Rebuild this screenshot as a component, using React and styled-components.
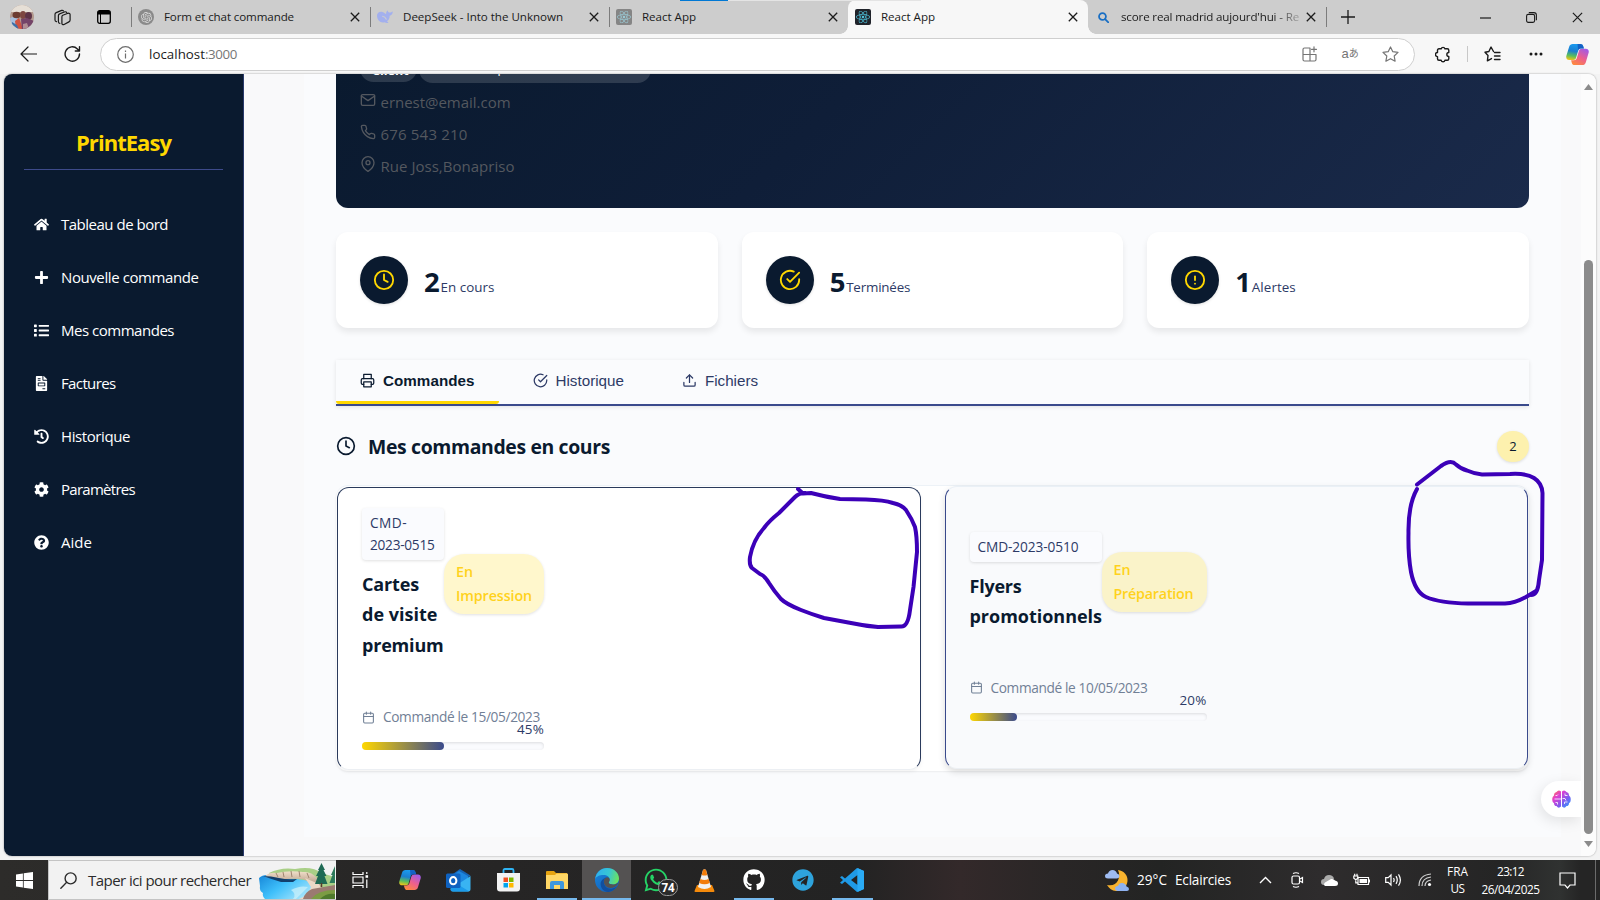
import React, { useLayoutEffect, useRef } from "react";
import styled, { createGlobalStyle, css } from "styled-components";
import {
  FaHome, FaPlus, FaList, FaFileInvoice, FaHistory, FaCog, FaQuestionCircle,
  FaReact, FaWhatsapp, FaGithub, FaTelegram, FaBrain,
} from "react-icons/fa";
import {
  FiClock, FiCheckCircle, FiAlertCircle, FiPrinter, FiUpload, FiMail, FiPhone, FiMapPin, FiCalendar,
} from "react-icons/fi";
import { SiOpenai } from "react-icons/si";

const GlobalStyle = createGlobalStyle`
  * { box-sizing: border-box; }
  body { margin: 0; background: #f7f7f7; overflow: hidden; }
  svg { display: block; flex: none; }
`;

const ui = `"Open Sans", "Noto Sans", sans-serif`;

/* ---------- text ---------- */

const TextSpan = styled.span`
  display: inline-block;
  white-space: pre;
  font-size: ${(p) => p.$size}px;
  font-weight: ${(p) => p.$weight || 400};
  color: ${(p) => p.$color || "inherit"};
  font-family: ${(p) => p.$family || "inherit"};
  line-height: ${(p) => (p.$lh ? `${p.$lh}px` : "inherit")};
`;

/* Tracks its letters so that the line takes the given width. */
function Label({ w, size, weight, color, family, lh, children }) {
  const ref = useRef(null);
  useLayoutEffect(() => {
    const el = ref.current;
    if (!w) return;
    el.style.letterSpacing = "0px";
    const natural = el.getBoundingClientRect().width;
    el.style.letterSpacing = `${(w - natural) / el.textContent.length}px`;
  }, [w]);
  return (
    <TextSpan ref={ref} $size={size} $weight={weight} $color={color} $family={family} $lh={lh}>
      {children}
    </TextSpan>
  );
}

/* ---------- window ---------- */

const Screen = styled.div`
  position: relative;
  width: 1600px;
  height: 900px;
  overflow: hidden;
  display: flex;
  flex-direction: column;
  background: #f3f3f3;
  font-family: ${ui};
  color: #1b1b1b;
`;

const TabStrip = styled.div`
  position: relative;
  height: 34px;
  flex: none;
  display: flex;
  background: #cdcdcd;
`;

const LoadStrip = styled.div`
  position: absolute;
  top: 0;
  left: 680px;
  width: 241px;
  height: 1px;
  background: linear-gradient(90deg, #0078d4 48px, #e4e4e4 48px);
`;

const StripTools = styled.div`
  width: 131px;
  display: flex;
  align-items: center;
  padding-left: 10px;
  gap: 20px;
  svg:last-child { margin-left: 6px; }
`;

const Tab = styled.div`
  position: relative;
  width: ${(p) => p.$w}px;
  display: flex;
  align-items: center;
  padding: 0 10px 0 7px;
  background: ${(p) => (p.$active ? "#f7f7f7" : "transparent")};
  border-radius: ${(p) => (p.$active ? "8px 8px 0 0" : "0")};
  ${(p) => p.$active && css`
    &::before, &::after {
      content: "";
      position: absolute;
      bottom: 0;
      width: 8px;
      height: 8px;
    }
    &::before { left: -8px; background: radial-gradient(circle at 0 0, #cdcdcd 7.5px, #f7f7f7 8px); }
    &::after { right: -8px; background: radial-gradient(circle at 100% 0, #cdcdcd 7.5px, #f7f7f7 8px); }
  `}
`;

const TabDivider = styled.i`
  position: absolute;
  left: 0;
  top: 7px;
  width: 1px;
  height: 20px;
  background: #7c7c7c;
`;

const TabTitle = styled.div`
  flex: 1;
  min-width: 0;
  margin-left: 10px;
  margin-bottom: 2px;
  line-height: 20px;
  overflow: hidden;
  ${(p) => p.$fade && css`
    -webkit-mask-image: linear-gradient(90deg, #000 152px, transparent 186px);
    mask-image: linear-gradient(90deg, #000 152px, transparent 186px);
  `}
`;

const Favicon = styled.span`
  width: 16px;
  height: 16px;
  flex: none;
  display: flex;
  align-items: center;
  justify-content: center;
  border-radius: ${(p) => p.$radius || "0"};
  background: ${(p) => p.$bg || "none"};
  color: ${(p) => p.$color || "#333"};
`;

const StripEnd = styled.div`
  position: relative;
  flex: 1;
  display: flex;
  align-items: center;
  padding-left: 15px;
`;

const WindowButtons = styled.div`
  margin-left: auto;
  margin-right: 17px;
  display: flex;
  gap: 35px;
`;

const Toolbar = styled.div`
  height: 40px;
  flex: none;
  display: flex;
  align-items: center;
  background: #f7f7f7;
  padding: 0 11px 0 20px;
`;

const NavButtons = styled.div`
  display: flex;
  align-items: center;
  gap: 27px;
  width: 80px;
`;

const AddressBar = styled.div`
  width: 1315px;
  height: 33px;
  display: flex;
  align-items: center;
  background: #fff;
  border: 1px solid #cfcfcf;
  border-radius: 17px;
  padding: 0 15px 0 16px;
  gap: 15px;
  flex: none;
`;

const Address = styled.span`
  margin-bottom: 2px;
`;

const AddressIcons = styled.div`
  margin-left: auto;
  display: flex;
  align-items: center;
  gap: 24px;
  color: #757575;
`;

const Translate = styled.span`
  width: 16px;
  display: flex;
  justify-content: center;
  align-items: center;
  font: 13px/16px "Liberation Sans", "Noto Sans CJK JP", sans-serif;
  small { font-size: 10px; }
`;

const ToolbarEnd = styled.div`
  flex: 1;
  display: flex;
  align-items: center;
  padding-left: 20px;
  svg:last-child { margin-left: auto; }
`;

const ToolbarDivider = styled.i`
  width: 1px;
  height: 16px;
  margin: 0 16px;
  background: #c8c8c8;
`;

const More = styled.svg`
  margin-left: 28px;
`;

/* ---------- page ---------- */

const Viewport = styled.div`
  height: 782px;
  flex: none;
  margin: 0 4px;
  display: flex;
  overflow: hidden;
  border-radius: 8px;
  background: #f9f9fa;
  box-shadow: 0 0 2px rgba(0, 0, 0, 0.4);
`;

const Sidebar = styled.aside`
  width: 240px;
  flex: none;
  background: #0a1a2f;
  border-right: 1px solid #2a3a6b;
  padding: 52px 20px 0;
  color: #fff;
`;

const Brand = styled.div`
  height: 44px;
  display: flex;
  justify-content: center;
  border-bottom: 1px solid #3d4a8a;
  line-height: 33px;
`;

const Menu = styled.nav`
  margin-top: 28px;
`;

const MenuItem = styled.div`
  height: 53px;
  display: flex;
  align-items: center;
  gap: 12px;
  padding-left: 10px;
  span { margin-bottom: 2px; }
`;

const Main = styled.main`
  flex: 1;
  padding: 0 20px 19px 60px;
`;

const Panel = styled.div`
  height: 763px;
  padding: 0 32px;
  background: #fafbfd;
`;

const Profile = styled.section`
  height: 134px;
  padding: 0 24px;
  border-radius: 0 0 12px 12px;
  background: linear-gradient(135deg, #0a1a2f 0%, #0f1e38 40%, #1a2a4a 100%);
  color: #54585f;
`;

const Tags = styled.div`
  height: 9px;
  margin-bottom: 3px;
  display: flex;
  align-items: flex-end;
  gap: 2px;
  overflow: hidden;
`;

const Tag = styled.span`
  flex: none;
  width: ${(p) => p.$w}px;
  height: 27px;
  margin-bottom: ${(p) => p.$lift || 0}px;
  border-radius: 14px;
  background: rgba(255, 255, 255, 0.14);
  color: #fff;
  font-size: 12.5px;
  font-weight: ${(p) => p.$weight || 400};
  line-height: 22px;
  padding-left: 12px;
  padding-top: ${(p) => p.$top || 0}px;
  white-space: nowrap;
`;

const ContactRow = styled.div`
  height: 32px;
  line-height: 32px;
  display: flex;
  gap: 4.5px;
  svg { margin-top: 6px; }
`;

const Stats = styled.section`
  display: grid;
  grid-template-columns: repeat(3, 1fr);
  gap: 24px;
  margin-top: 24px;
`;

const StatCard = styled.div`
  height: 96px;
  padding: 0 24px;
  display: flex;
  align-items: center;
  gap: 16px;
  background: #fff;
  border-radius: 12px;
  box-shadow: 0 4px 6px rgba(0, 0, 0, 0.08);
`;

const StatIcon = styled.div`
  width: 48px;
  height: 48px;
  border-radius: 50%;
  display: flex;
  align-items: center;
  justify-content: center;
  background: #0a1a2f;
  color: #ffd700;
  box-shadow: 0 1px 3px rgba(0, 0, 0, 0.12);
`;

const StatText = styled.div`
  display: flex;
  align-items: baseline;
  gap: 1px;
  line-height: 44px;
  padding-top: 8px;
`;

const Tabs = styled.div`
  height: 46px;
  margin-top: 32px;
  display: flex;
  gap: 10px;
  border-bottom: 2px solid #3a4a8c;
  box-shadow: 0 1px 4px rgba(0, 0, 0, 0.1);
`;

const PageTab = styled.div`
  padding: 0 24px;
  display: flex;
  align-items: center;
  gap: 8px;
  color: ${(p) => (p.$active ? "#0a1a2f" : "#2d3a66")};
  border-bottom: 3px solid ${(p) => (p.$active ? "#ffd700" : "transparent")};
  border-radius: 0 0 3px 3px;
`;

const SectionHead = styled.div`
  height: 30px;
  margin: 25px 0;
  display: flex;
  align-items: center;
  gap: 12px;
  color: #0a1a2f;
`;

const Count = styled.span`
  margin-left: auto;
  width: 32px;
  height: 31px;
  border-radius: 16px;
  display: flex;
  align-items: center;
  justify-content: center;
  background: #fdf1ae;
  box-shadow: 0 1px 3px rgba(0, 0, 0, 0.12);
`;

const Orders = styled.section`
  height: 285px;
  display: flex;
  gap: 24px;
  padding: 0 1px;
  background: #fff;
  border-radius: 12px;
  box-shadow: 0 1px 2px rgba(0, 0, 0, 0.06), 0 -1px 0 #edf2f7;
`;

const OrderCard = styled.article`
  flex: 1;
  height: ${(p) => p.$h}px;
  margin-top: ${(p) => p.$mt}px;
  padding: ${(p) => p.$pt}px 24px 0;
  border: 1px solid ${(p) => p.$border};
  border-top-color: ${(p) => (p.$hover ? "#eaf0f6" : p.$border)};
  border-bottom-color: #eceff3;
  border-radius: 12px;
  background: ${(p) => (p.$hover ? "#f9fafc" : "#fff")};
  box-shadow: ${(p) => (p.$hover ? "0 3px 7px rgba(0,0,0,0.14)" : "0 2px 4px rgba(0,0,0,0.05)")};
`;

const OrderBody = styled.div`
  width: ${(p) => p.$w}px;
`;

const OrderTop = styled.div`
  display: flex;
  align-items: center;
`;

const OrderInfo = styled.div`
  width: ${(p) => p.$w}px;
  flex: none;
`;

const OrderId = styled.div`
  display: flex;
  flex-direction: column;
  align-items: flex-start;
  padding: 4px 8px;
  margin-bottom: 9px;
  border-radius: 4px;
  background: #fafbfe;
  box-shadow: 0 1px 3px rgba(0, 0, 0, 0.12);
`;

const OrderTitle = styled.div`
  display: flex;
  flex-direction: column;
  align-items: flex-start;
`;

const Status = styled.div`
  flex: 1;
  height: 60px;
  display: flex;
  flex-direction: column;
  align-items: flex-start;
  padding: 6px 12px;
  border-radius: 20px;
  background: rgba(255, 215, 0, 0.2);
  box-shadow: 0 1px 3px rgba(0, 0, 0, 0.12);
`;

const OrderDate = styled.div`
  display: flex;
  align-items: center;
  gap: 8px;
  margin-top: ${(p) => p.$gap}px;
  color: #718096;
`;

const Percent = styled.div`
  display: flex;
  justify-content: flex-end;
  margin-top: -10px;
`;

const Track = styled.div`
  height: 8px;
  margin-top: 2px;
  border-radius: 4px;
  background: #fafbfe;
  box-shadow: inset 0 1px 3px rgba(0, 0, 0, 0.12);
`;

const Fill = styled.div`
  height: 8px;
  border-radius: 4px;
  background: linear-gradient(90deg, #ffd700, #3a4a8c);
`;

const ScrollBar = styled.div`
  width: 15px;
  flex: none;
  display: flex;
  flex-direction: column;
  align-items: center;
  background: #fcfcfc;
  padding-top: 10px;
`;

const Thumb = styled.div`
  width: 9px;
  height: 574px;
  margin: 170px 0 7px;
  border-radius: 5px;
  background: #8b8b8b;
`;

const Assistant = styled.div`
  position: absolute;
  left: 1541px;
  top: 781px;
  width: 40px;
  height: 36px;
  display: flex;
  align-items: center;
  padding-left: 11px;
  background: #fff;
  border-radius: 18px 0 0 18px;
  box-shadow: -2px 4px 14px rgba(0, 0, 0, 0.1);
  clip-path: inset(-20px 0 -24px -20px);
  svg path { fill: url(#brainGrad); }
  svg path.folds { fill: none; stroke: #fff; stroke-width: 1; opacity: 0.8; }
`;

const Ink = styled.svg`
  position: absolute;
  left: 0;
  top: 0;
  pointer-events: none;
  fill: none;
  stroke: #3c00b8;
  stroke-width: 4;
  stroke-linecap: round;
  stroke-linejoin: round;
`;

/* ---------- taskbar ---------- */

const Taskbar = styled.footer`
  height: 40px;
  margin-top: 4px;
  flex: none;
  display: flex;
  color: #fff;
  background: linear-gradient(90deg, #2d2c2a 0, #262525 500px, #232323 860px, #33292a 960px, #292626 1060px, #232423 1160px, #2e2c2d 1320px, #252525 1500px, #303231 1560px, #252525 1580px);
`;

const StartButton = styled.div`
  width: 48px;
  display: flex;
  align-items: center;
  justify-content: center;
`;

const SearchBox = styled.div`
  width: 288px;
  display: flex;
  align-items: center;
  background: #f2f2f2;
  border: 1px solid #c4c4c4;
  border-right: 0;
  color: #2b2b2b;
  padding-left: 11px;
  gap: 11px;
  overflow: hidden;
  > svg:last-child { margin-left: -3px; }
`;

const TaskButton = styled.div`
  position: relative;
  width: 49.2px;
  display: flex;
  align-items: center;
  justify-content: center;
  background: ${(p) => (p.$active ? "#545252" : "transparent")};
  &::after {
    content: "";
    position: absolute;
    bottom: 0;
    left: ${(p) => (p.$active ? 0 : 4.5)}px;
    right: ${(p) => (p.$active ? 0 : 4.5)}px;
    height: ${(p) => (p.$open || p.$active ? 2 : 0)}px;
    background: #76b9ed;
  }
`;

const Badge = styled.span`
  position: absolute;
  left: 27px;
  top: 19px;
  width: 20px;
  height: 17px;
  border: 1px solid #9b9b9b;
  border-radius: 9px;
  background: #2a2a2a;
  font: 700 11.5px/15px ${ui};
  text-align: center;
`;

const Tray = styled.div`
  margin-left: auto;
  display: flex;
  align-items: center;
`;

const TrayIcon = styled.div`
  width: 32px;
  display: flex;
  justify-content: center;
`;

const TrayText = styled.div`
  width: ${(p) => p.$w}px;
  display: flex;
  flex-direction: column;
  align-items: center;
`;

const Weather = styled.div`
  display: flex;
  align-items: center;
  gap: 8px;
  margin-right: 18px;
  span { margin-bottom: 1px; }
`;

const Notice = styled.div`
  width: 40px;
  height: 40px;
  margin-right: 8px;
  display: flex;
  align-items: center;
  justify-content: center;
`;

const DesktopEdge = styled.div`
  width: 5px;
  height: 40px;
  border-left: 1px solid #6b6b6b;
`;

/* ---------- drawings ---------- */

const Cross = ({ s = 10, sw = 1.3 }) => (
  <svg width={s} height={s} viewBox="0 0 10 10" stroke="#1b1b1b" strokeWidth={sw} fill="none">
    <path d="M.8.8l8.4 8.4M9.2.8L.8 9.2" />
  </svg>
);

const Avatar = () => (
  <svg width="24" height="24" viewBox="0 0 24 24">
    <clipPath id="av"><circle cx="12" cy="12" r="12" /></clipPath>
    <g clipPath="url(#av)">
      <rect width="24" height="24" fill="#b39a8e" />
      <rect width="24" height="7" fill="#e6dfd6" />
      <path d="M0 13l6-2 3 5v8H0z" fill="#a9c0de" />
      <ellipse cx="6.500" cy="10" rx="4" ry="3.200" fill="#6d3d31" />
      <ellipse cx="13" cy="10" rx="3" ry="4" fill="#7d4740" />
      <ellipse cx="18.500" cy="11" rx="3.500" ry="4" fill="#5d3346" />
      <path d="M5 16l4-3 4 11H6z" fill="#cf5240" />
      <path d="M11 14l6-1 7 3v9H12z" fill="#744468" />
      <path d="M13 19l4-1 2 6h-6z" fill="#b08d93" />
      <path d="M2 17l5 3 2 5H2z" fill="#3c6fa8" />
    </g>
  </svg>
);

const Workspaces = () => (
  <svg width="17" height="17" viewBox="0 0 17 17" fill="none" stroke="#1b1b1b" strokeWidth="1.2" strokeLinejoin="round" strokeLinecap="round">
    <path d="M8.800 6.200l5.200-1.900q1.900-.4 2.100 1.200v5.500q0 1.300-1.200 1.900l-4.800 2.600q-2 .7-2.200-1.100V7.800q0-1.200.9-1.600z" />
    <path d="M5.800 14.400q-1.400-.1-1.400-1.600V6.600q.1-1.300 1.200-1.700L10.900 2.800q1.400-.3 1.900.9" />
    <path d="M2.500 12.700Q1 12.600 1 11.100V5.300q.1-1.300 1.200-1.700L7.700 1.400q1.200-.3 1.700.5" />
  </svg>
);

const TabActions = () => (
  <svg width="14" height="14" viewBox="0 0 14 14">
    <rect x=".7" y=".7" width="12.600" height="12.600" rx="2" fill="none" stroke="#000" strokeWidth="1.3" />
    <path d="M.7 2.500q0-1.800 1.800-1.800h9q1.800 0 1.800 1.800V4.500H.7z" fill="#000" />
    <path d="M3.500 4v9" stroke="#000" />
  </svg>
);

const Whale = () => (
  <svg width="16" height="14" viewBox="0 0 16 14" fill="#a3b0ee">
    <path d="M0 5.500C0 2.800 2.700 1.200 5.500 2c1.700.5 2.300 1.600 3.600 2.100C9 2.500 9.500 1 10.800.4c0 1.300.5 1.900 1.600 2 1.300.1 2.300-.5 3.400-1-.1 2.600-1.500 3.800-3.100 4.400.1 2.400-1 4.400-2.700 5.400l1.500 1.600c-1.500.5-2.900 0-4-.6C3.500 13.300 0 10.400 0 5.500z" />
    <path d="M5.300 6.300c1.800.2 3.200 1.300 4.200 3.200" stroke="#cdcdcd" fill="none" strokeWidth="1.100" />
  </svg>
);

const Magnifier = ({ color, size = 11, sw = 2, flip }) => (
  <svg width={size} height={size} viewBox="0 0 16 16" fill="none" stroke={color} strokeWidth={sw} strokeLinecap="round">
    {flip ? <><circle cx="10" cy="6" r="5.200" /><path d="M6.300 9.700L.8 15.200" /></> : <><circle cx="6.500" cy="6.500" r="5" /><path d="M10.300 10.300L15 15" /></>}
  </svg>
);

const CopilotLogo = ({ s = 23 }) => (
  <svg width={s} height={s} viewBox="0 0 24 24">
    <defs>
      <linearGradient id="cpA" x1=".5" y1="0" x2=".3" y2="1">
        <stop offset="0" stopColor="#1a9bf0" /><stop offset=".45" stopColor="#1b7fd0" /><stop offset=".75" stopColor="#5bbf5a" /><stop offset="1" stopColor="#f0c419" />
      </linearGradient>
      <linearGradient id="cpB" x1=".8" y1="0" x2=".2" y2="1">
        <stop offset="0" stopColor="#a05be8" /><stop offset=".5" stopColor="#ec5f8f" /><stop offset="1" stopColor="#ff8a3c" />
      </linearGradient>
    </defs>
    <path d="M7 1h8.200c1.400 0 2.300.8 2.700 2.200l.8 2.600h-3.200c-1.500 0-2.400.8-2.800 2.300l-2.200 7.400c-.4 1.500-1.400 2.300-3 2.300H3.300C1 17.800-.3 15.800.4 13.400L3.300 4C3.900 2 5.200 1 7 1z" fill="url(#cpA)" />
    <path d="M17 23H8.800c-1.400 0-2.300-.8-2.700-2.200l-.8-2.900h3c1.500 0 2.500-.8 3-2.300l2.200-7.400c.4-1.500 1.400-2.300 3-2.300h4.200c2.300 0 3.600 2 2.900 4.400L20.700 20c-.6 2-1.900 3-3.700 3z" fill="url(#cpB)" />
    <path d="M12 1h3.200c1.400 0 2.300.8 2.700 2.200l.8 2.600h-3.200c-1.500 0-2.400.8-2.800 2.300z" fill="#1450b8" opacity=".75" />
  </svg>
);

const LakeArt = () => (
  <svg width="76" height="38" viewBox="0 0 76 38">
    <defs>
      <linearGradient id="lake" x1="0" y1="0" x2="1" y2=".6"><stop offset="0" stopColor="#1686d8" /><stop offset=".5" stopColor="#3fc0fb" /><stop offset="1" stopColor="#a6e4fb" /></linearGradient>
      <linearGradient id="cliff" x1="0" y1="0" x2="0" y2="1"><stop offset="0" stopColor="#f0dfca" /><stop offset="1" stopColor="#a98d78" /></linearGradient>
    </defs>
    <path d="M10 12Q22 6 36 8q18-3 26 4l14 4v12H20z" fill="#a9cf86" />
    <path d="M0 17q3-3 8-3l44 6 4 8-8 10H6q-3-3-2-6-4-2-3-7z" fill="url(#lake)" />
    <path d="M6 16q3-5 12-4 12-3 26-1 8-1 14 6l4 9q-10-4-18-8-14-1-22 1-10-3-16-3z" fill="url(#cliff)" />
    <path d="M4 15q8 0 16 2 8 2 18 1l-4 3-12 0Q12 18 4 15z" fill="#12406d" />
    <path d="M17 12l2 4M24 11l1 5M32 10l1 6M40 10l1 6M48 12l2 5" stroke="#a08670" strokeWidth="1" />
    <path d="M40 38q10-4 12-12l-6-9 14 6 8 15z" fill="#ead8c6" />
    <path d="M32 29q9-5 17-3-6 6-12 12h-3q4-5-2-9z" fill="#c9f0fb" opacity=".75" />
    <path d="M44 38q2-7 9-10l23-4v14z" fill="#9b7a71" />
    <path d="M52 38q7-9 24-9v9z" fill="#7c9c43" />
    <path d="M61 38q6-6 15-5v5z" fill="#4f7a2c" />
    <path d="M62.500 2l3.500 7h-1.500l3 6h-2l3 8H56l3-8h-2l3-6h-1z" fill="#1f6a54" />
    <path d="M62.500 22v4" stroke="#5a3b2b" strokeWidth="1.500" />
    <path d="M76 5l-4 9h1.500l-3 8H76z" fill="#2d7a5b" />
  </svg>
);

const WindowsLogo = () => (
  <svg width="17" height="17" viewBox="0 0 17 17" fill="#fff">
    <path d="M0 2.400l6.900-1V8H0zM7.700 1.300L17 0v8H7.700zM0 8.900h6.900v6.600L0 14.600zM7.700 8.900H17V17l-9.300-1.300z" />
  </svg>
);

const TaskView = () => (
  <svg width="17" height="16" viewBox="0 0 17 16" fill="none" stroke="#fff" strokeWidth="1.200">
    <path d="M1 0v2.500h10V0M1 16v-2.500h10V16M1 5h10v6H1zM14.800 0v2M14.800 7.500V16" />
    <path d="M14.800 3.200v2.600" strokeWidth="2.600" />
  </svg>
);

const OutlookLogo = () => (
  <svg width="25" height="23" viewBox="0 0 25 23">
    <path d="M4 7l10-7 10.500 6.500L14 14z" fill="#1664b5" />
    <path d="M4 8l9-6 9 5v8H4z" fill="#1c87e0" />
    <path d="M24.500 7v13q0 2.500-2.500 2.500H7q-2.500 0-2.500-2.500z" fill="#39b4f2" />
    <path d="M4.500 11L23 22.200q-.5.300-1.500.3H7q-2.500 0-2.500-2.500z" fill="#1c9bea" />
    <rect x="0" y="4.500" width="14.500" height="14.500" rx="1.500" fill="#0f62c0" />
    <ellipse cx="7.200" cy="11.700" rx="3.200" ry="3.600" fill="none" stroke="#fff" strokeWidth="2" />
  </svg>
);

const StoreLogo = () => (
  <svg width="23" height="24" viewBox="0 0 23 24">
    <path d="M6.500 6V2.500q0-1.500 1.500-1.500h7q1.500 0 1.500 1.500V6" fill="none" stroke="#2fb4f4" strokeWidth="1.800" />
    <path d="M0 5h23v15.500q0 3-3 3H3q-3 0-3-3z" fill="#f3f3f3" />
    <path d="M6.500 9.500h4.500V14H6.500z" fill="#f25022" /><path d="M12 9.500h4.500V14H12z" fill="#7fba00" />
    <path d="M6.500 15h4.500v4.500H6.500z" fill="#00a4ef" /><path d="M12 15h4.500v4.500H12z" fill="#ffb900" />
  </svg>
);

const FolderLogo = () => (
  <svg width="22" height="19" viewBox="0 0 22 19">
    <path d="M0 1q0-1 1-1h7l2 2h11v5H0z" fill="#e6a310" />
    <path d="M0 4h9l1.500-1.500H21q1 0 1 1V18H0z" fill="#ffd766" />
    <path d="M4 18v-6q0-2 2-2h10q2 0 2 2v6h-4v-4H8v4z" fill="#3f97dd" />
  </svg>
);

const EdgeLogo = () => (
  <svg width="24" height="24" viewBox="0 0 24 24">
    <defs>
      <linearGradient id="edT" x1="0" y1=".3" x2="1" y2=".5"><stop offset="0" stopColor="#2fb0ee" /><stop offset=".55" stopColor="#37c6d4" /><stop offset="1" stopColor="#6be35e" /></linearGradient>
      <linearGradient id="edB" x1="0" y1="0" x2=".7" y2="1"><stop offset="0" stopColor="#1a86dc" /><stop offset="1" stopColor="#1161ba" /></linearGradient>
    </defs>
    <circle cx="12" cy="12" r="12" fill="url(#edB)" />
    <path d="M.2 11C1 4.500 6 0 12 0c7 0 12 5 12 10.500 0 3.800-2.800 6-6 6-2.600 0-4.300-1-4.300-2 0-.8 1-1.200 1-3C14.700 8.800 12 7 8.500 7 4.500 7 1.200 8.500.2 11z" fill="url(#edT)" />
    <path d="M8.800 13.500c0-2.500 1.600-4 3.200-4.200 1.700.2 2.700 1.200 2.700 2.400 0 1.500-1 2-1 2.800 0 1 1.700 2 4.300 2 1.500 0 3.200-.5 4.400-1.500l.6.800c-2 3-5 4.200-7.500 4.200-4 0-6.700-3-6.700-6.500z" fill="#545252" />
    <path d="M8.800 13c-.3 4.500 3.200 8.300 8 7.700 2-.3 4-1.300 5.300-2.700C20 21.800 16.200 24 12.200 24 8 23 5.500 19.500 5.600 16c.1-3 2.500-6 6.400-6.700-2 .5-3.100 2-3.200 3.700z" fill="#104f9f" />
  </svg>
);

const VlcLogo = () => (
  <svg width="21" height="23" viewBox="0 0 21 23">
    <path d="M3 16h15l2.500 6q0 1-1 1h-18q-1.200 0-1-1z" fill="#f58a0b" />
    <path d="M9 1q1.500-1.500 3 0l5 17q-6.500 4-13 0z" fill="#f1f1f1" />
    <path d="M9 1q1.500-1.500 3 0l1.300 5q-2.800 1.200-5.600 0zM6.400 10q4 2.200 8.200 0l1.200 4q-5.300 2.600-10.600 0z" fill="#f27c0a" />
  </svg>
);

const CodeLogo = () => (
  <svg width="24" height="24" viewBox="0 0 24 24">
    <path d="M17 0l7 3v18l-7 3L5 13.500 2 16l-2-1.300L3 12 0 9.300 2 8l3 2.500zM17.500 7L11 12l6.500 5z" fill="#1f9ae6" fillRule="evenodd" />
    <path d="M17.500 0L24 3v18l-6.500 3z" fill="#2aabf5" />
  </svg>
);

const MoonCloud = () => (
  <svg width="24" height="23" viewBox="0 0 24 23">
    <path d="M13 1c6 1 10 5 9.500 11S17 22.500 11 22c-4-.3-7-2.500-9-6 6 1 9-1 11-4.500C14.500 8 14.500 4 13 1z" fill="#f9b32e" />
    <path d="M3 9.500Q0 9.500 0 7t3-2.500Q4 1 7.500 1T12 4.500q2.500.5 2.500 2.500T12 9.500z" fill="#9fbcf2" />
    <path d="M12.500 22q-2.500-.2-2.500-2.500t3-2.500q1-3.500 4.500-3t4 3.500q2.500.5 2.500 2.500t-2 2z" fill="#8fb2f0" />
  </svg>
);

const line = { fill: "none", stroke: "#fff", strokeWidth: 1.2 };

const PlugBattery = () => (
  <svg width="17" height="14" viewBox="0 0 17 14" {...line}>
    <path d="M5 4.500h10.500v7H5z" /><path d="M6.500 6h7.500v4H6.500z" fill="#fff" stroke="none" /><path d="M16.500 6.500v3" />
    <path d="M.8 3h4v2.200L2.800 6.800.8 5.200zM1.700 3V.8M4 3V.8M2.800 6.800v3H5" />
  </svg>
);

const Speaker = () => (
  <svg width="17" height="14" viewBox="0 0 17 14" {...line}>
    <path d="M.7 4.700h2.500L6 2v10L3.200 9.300H.7zM8.500 5q1.300 2 0 4M11 3.200q2.500 3.800 0 7.600M13.500 1.300q3.800 5.700 0 11.400" />
  </svg>
);

const WifiIcon = () => (
  <svg width="14" height="14" viewBox="0 0 14 14" {...line} stroke="#d0d0d0">
    <path d="M1 13Q1 2 13 1M4 13q0-8 9-9M7 13q0-5 6-6" /><circle cx="11.500" cy="11.500" r="1.600" fill="#fff" stroke="none" />
  </svg>
);

const CameraTray = () => (
  <svg width="13" height="16" viewBox="0 0 13 16" {...line}>
    <rect x="1" y="4" width="7.500" height="8" rx="1.500" /><path d="M9 7l2.500-1.500v5L9 9M2 1.500q3-1.500 6 0M2 14.500q3 1.500 6 0" />
  </svg>
);

const CloudTray = () => (
  <svg width="17" height="12" viewBox="0 0 17 12">
    <path d="M3 11Q0 11 0 8t3-3q1-4 5-4t5 3.500l-7 6z" fill="#aaa" /><path d="M4 12q-2-1.500 0-3.500L10 5q3-.5 4 1.500 3 .5 3 3T14 12z" fill="#fff" />
  </svg>
);

const toolLine = { fill: "none", stroke: "currentColor", strokeWidth: 1.2, strokeLinejoin: "round", strokeLinecap: "round" };

/* ---------- data ---------- */

const menu = [
  [FaHome, "Tableau de bord", 107],
  [FaPlus, "Nouvelle commande", 137.5],
  [FaList, "Mes commandes", 113],
  [FaFileInvoice, "Factures", 54.5],
  [FaHistory, "Historique", 69],
  [FaCog, "Paramètres", 74],
  [FaQuestionCircle, "Aide", 31],
];

const contacts = [
  [FiMail, "ernest@email.com", 130],
  [FiPhone, "676 543 210", 87],
  [FiMapPin, "Rue Joss,Bonapriso", 134],
];

const stats = [
  [FiClock, "2", "En cours", 54],
  [FiCheckCircle, "5", "Terminées", 64],
  [FiAlertCircle, "1", "Alertes", 44],
];

const pageTabs = [
  [FiPrinter, "Commandes", 91.5, true],
  [FiCheckCircle, "Historique", 68.5],
  [FiUpload, "Fichiers", 53],
];

const orders = [
  {
    id: [["CMD-", 37], ["2023-0515", 64.5]], title: [["Cartes", 57], ["de visite", 75.5], ["premium", 81.5]],
    status: [["En", 17], ["Impression", 76]], date: ["Commandé le 15/05/2023", 157], percent: 45, gap: 46,
    w: 182, infoW: 82, card: { $h: 283, $mt: 1, $pt: 20, $border: "#2a3a5c" },
  },
  {
    id: [["CMD-2023-0510", 101]], title: [["Flyers", 52], ["promotionnels", 132.5]],
    status: [["En", 17], ["Préparation", 80]], date: ["Commandé le 10/05/2023", 157], percent: 20, gap: 45,
    w: 237, infoW: 132, card: { $h: 283, $mt: 0, $pt: 45, $border: "#3a4a8c", $hover: true },
  },
];

function Order({ o }) {
  return (
    <OrderCard {...o.card}>
      <OrderBody $w={o.w}>
        <OrderTop>
          <OrderInfo $w={o.infoW}>
            <OrderId>
              {o.id.map(([t, w]) => <Label key={t} w={w} size={13.7} weight={500} lh={22} color="#2d3a66">{t}</Label>)}
            </OrderId>
            <OrderTitle>
              {o.title.map(([t, w]) => <Label key={t} w={w} size={18} weight={700} lh={30.4} color="#0a1a2f">{t}</Label>)}
            </OrderTitle>
          </OrderInfo>
          <Status>
            {o.status.map(([t, w]) => <Label key={t} w={w} size={14.3} weight={600} lh={24} color="#ffd21c">{t}</Label>)}
          </Status>
        </OrderTop>
        <OrderDate $gap={o.gap}>
          <FiCalendar size={13} />
          <Label w={o.date[1]} size={13.7} lh={22}>{o.date[0]}</Label>
        </OrderDate>
        <Percent><Label w={27} size={13.4} weight={500} lh={22} color="#2d3a66">{`${o.percent}%`}</Label></Percent>
        <Track><Fill style={{ width: `${o.percent}%` }} /></Track>
      </OrderBody>
    </OrderCard>
  );
}

export default function App() {
  return (
    <>
      <GlobalStyle />
      <Screen>
        <TabStrip>
          <StripTools><Avatar /><Workspaces /><TabActions /></StripTools>
          <Tab $w={239}>
            <TabDivider />
            <Favicon $bg="#8a8a8a" $radius="50%" $color="#dcdcdc"><SiOpenai size={11} /></Favicon>
            <TabTitle><Label w={130} size={11.6}>Form et chat commande</Label></TabTitle>
            <Cross />
          </Tab>
          <Tab $w={239}>
            <TabDivider />
            <Favicon><Whale /></Favicon>
            <TabTitle><Label w={160} size={11.6}>DeepSeek - Into the Unknown</Label></TabTitle>
            <Cross />
          </Tab>
          <Tab $w={239}>
            <TabDivider />
            <Favicon $bg="#858585" $radius="2px" $color="#9ac9d4"><FaReact size={14} /></Favicon>
            <TabTitle><Label w={54} size={11.6}>React App</Label></TabTitle>
            <Cross />
          </Tab>
          <Tab $w={240} $active>
            <Favicon $bg="#20232a" $radius="2px" $color="#4fc3dc"><FaReact size={14} /></Favicon>
            <TabTitle><Label w={54} size={11.6}>React App</Label></TabTitle>
            <Cross />
          </Tab>
          <Tab $w={238}>
            <Favicon><Magnifier color="#1a6fc4" sw={2.600} /></Favicon>
            <TabTitle $fade><Label w={178} size={11.6}>score real madrid aujourd'hui - Re</Label></TabTitle>
            <Cross />
          </Tab>
          <StripEnd>
            <TabDivider />
            <svg width="14" height="14" stroke="#1b1b1b" strokeWidth="1.3"><path d="M7 0v14M0 7h14" /></svg>
            <WindowButtons>
              <svg width="11" height="11" stroke="#1b1b1b" strokeWidth="1.200"><path d="M0 6h11" /></svg>
              <svg width="11" height="11" viewBox="0 0 11 11" fill="none" stroke="#1b1b1b" strokeWidth="1.100"><rect x=".6" y="2.400" width="8" height="8" rx="1.600" /><path d="M2.800.6h5q2.600 0 2.600 2.600v5" /></svg>
              <Cross s={11} sw={1.1} />
            </WindowButtons>
          </StripEnd>
          <LoadStrip />
        </TabStrip>

        <Toolbar>
          <NavButtons>
            <svg width="17" height="16" viewBox="0 0 17 16" {...toolLine} color="#1b1b1b"><path d="M16.500 8H1M8 1L1 8l7 7" /></svg>
            <svg width="17" height="16" viewBox="0 0 17 16" {...toolLine} strokeWidth={1.4} color="#1b1b1b"><path d="M15.500 8a7.200 7.200 0 1 1-2.100-5.100L15.500 5M15.500.8V5h-4.200" /></svg>
          </NavButtons>
          <AddressBar>
            <svg width="17" height="17" viewBox="0 0 17 17" fill="none" stroke="#6e6e6e" strokeWidth="1.200"><circle cx="8.500" cy="8.500" r="7.800" /><path d="M8.500 7.500v5M8.500 4.500v1.500" /></svg>
            <Address><Label w={56} size={13.3}>localhost</Label><Label w={32} size={13.3} color="#767676">:3000</Label></Address>
            <AddressIcons>
              <svg width="16" height="16" viewBox="0 0 16 16" {...toolLine}><path d="M8 2H2.500Q1 2 1 3.500v10Q1 15 2.500 15h10q1.500 0 1.500-1.500V8.500M1 8.500h13M8 2v13M12 .8v5M9.500 3.300h5" /></svg>
              <Translate>a<small>あ</small></Translate>
              <svg width="17" height="16" viewBox="0 0 17 16" {...toolLine}><path d="M8.500 1l2.300 4.700 5.200.7-3.800 3.600.9 5.200-4.600-2.500-4.600 2.500.9-5.200L1 6.400l5.200-.7z" /></svg>
            </AddressIcons>
          </AddressBar>
          <ToolbarEnd>
            <svg width="16" height="17" viewBox="0 0 16 17" {...toolLine} strokeWidth={1.4} color="#1b1b1b"><path d="M4 2.800h2.200a1.900 1.900 0 0 1 3.700 0h2.400q1.500 0 1.500 1.500v2.200a1.900 1.900 0 1 0 0 3.900v2.400q0 1.500-1.500 1.500H9.900a1.900 1.900 0 0 1-3.700 0H4q-1.500 0-1.500-1.500v-2.200a2 2 0 0 1 0-4.100V4.300Q2.500 2.800 4 2.800z" /></svg>
            <ToolbarDivider />
            <svg width="17" height="16" viewBox="0 0 17 16" {...toolLine} strokeWidth={1.4} color="#1b1b1b"><path d="M9.500 5.500L7 1 4.900 5.500 1 6.200l3 3.300-.6 5.300L7.500 12.600M10.500 6.500H16M10.500 10H16M10.500 13.500H16" /></svg>
            <More width="14" height="4" fill="#1b1b1b"><circle cx="2" cy="2" r="1.500" /><circle cx="7" cy="2" r="1.500" /><circle cx="12" cy="2" r="1.500" /></More>
            <CopilotLogo s={23} />
          </ToolbarEnd>
        </Toolbar>

        <Viewport>
          <Sidebar>
            <Brand><Label w={95} size={22} weight={700} color="#ffd700">PrintEasy</Label></Brand>
            <Menu>
              {menu.map(([Icon, text, w]) => (
                <MenuItem key={text}><Icon size={15} /><Label w={w} size={15}>{text}</Label></MenuItem>
              ))}
            </Menu>
          </Sidebar>
          <Main>
            <Panel>
              <Profile>
                <Tags>
                  <Tag $w={57} $weight={700} $lift={1} $top={5}>Client</Tag>
                  <Tag $w={232} $top={2}>★ Client depuis 2023</Tag>
                </Tags>
                {contacts.map(([Icon, text, w]) => (
                  <ContactRow key={text}><Icon size={16} /><Label w={w} size={15}>{text}</Label></ContactRow>
                ))}
              </Profile>
              <Stats>
                {stats.map(([Icon, n, text, w]) => (
                  <StatCard key={text}>
                    <StatIcon><Icon size={22} /></StatIcon>
                    <StatText>
                      <Label w={15.5} size={27.5} weight={700} color="#0a1a2f">{n}</Label>
                      <Label w={w} size={13.4} color="#2d3a66">{text}</Label>
                    </StatText>
                  </StatCard>
                ))}
              </Stats>
              <Tabs>
                {pageTabs.map(([Icon, text, w, active]) => (
                  <PageTab key={text} $active={active}>
                    <Icon size={15} />
                    <Label w={w} size={15.2} weight={active ? 700 : 400} family='"Liberation Sans", sans-serif'>{text}</Label>
                  </PageTab>
                ))}
              </Tabs>
              <SectionHead>
                <FiClock size={20} />
                <Label w={242} size={19.400} weight={700}>Mes commandes en cours</Label>
                <Count><Label size={13} weight={500}>2</Label></Count>
              </SectionHead>
              <Orders>
                {orders.map((o) => <Order key={o.percent} o={o} />)}
              </Orders>
            </Panel>
          </Main>
          <ScrollBar>
            <svg width="9" height="6" fill="#8b8b8b"><path d="M4.500 0L9 6H0z" /></svg>
            <Thumb />
            <svg width="9" height="6" fill="#8b8b8b"><path d="M4.500 6L9 0H0z" /></svg>
          </ScrollBar>
        </Viewport>

        <Taskbar>
          <StartButton><WindowsLogo /></StartButton>
          <SearchBox>
            <Magnifier color="#2b2b2b" size={17} sw={1.300} flip />
            <Label w={163} size={15}>Taper ici pour rechercher</Label>
            <LakeArt />
          </SearchBox>
          <TaskButton><TaskView /></TaskButton>
          <TaskButton><CopilotLogo s={22} /></TaskButton>
          <TaskButton><OutlookLogo /></TaskButton>
          <TaskButton><StoreLogo /></TaskButton>
          <TaskButton $open><FolderLogo /></TaskButton>
          <TaskButton $active><EdgeLogo /></TaskButton>
          <TaskButton><FaWhatsapp size={26} color="#25d366" /><Badge>74</Badge></TaskButton>
          <TaskButton><VlcLogo /></TaskButton>
          <TaskButton $open><FaGithub size={22} /></TaskButton>
          <TaskButton><FaTelegram size={22} color="#2ea3dc" /></TaskButton>
          <TaskButton $open><CodeLogo /></TaskButton>
          <Tray>
            <Weather>
              <MoonCloud />
              <Label w={30} size={13.600}>29°C</Label>
              <Label w={56} size={13.600}>Eclaircies</Label>
            </Weather>
            <TrayIcon><svg width="13" height="8" viewBox="0 0 13 8" {...line} strokeWidth={1.4}><path d="M1 7l5.500-5.500L12 7" /></svg></TrayIcon>
            <TrayIcon><CameraTray /></TrayIcon>
            <TrayIcon><CloudTray /></TrayIcon>
            <TrayIcon><PlugBattery /></TrayIcon>
            <TrayIcon><Speaker /></TrayIcon>
            <TrayIcon><WifiIcon /></TrayIcon>
            <TrayText $w={33}>
              <Label w={21} size={11.800} lh={17}>FRA</Label>
              <Label w={14} size={11.800} lh={17}>US</Label>
            </TrayText>
            <TrayText $w={73}>
              <Label w={27} size={11.800} lh={18}>23:12</Label>
              <Label w={58} size={11.800} lh={18}>26/04/2025</Label>
            </TrayText>
            <Notice><svg width="17" height="17" viewBox="0 0 17 17" {...line}><path d="M1 1h15v12h-5l-2.500 3L6 13H1z" /></svg></Notice>
            <DesktopEdge />
          </Tray>
        </Taskbar>

        <Assistant>
          <svg width="0" height="0"><linearGradient id="brainGrad" x1="0" y1="0" x2="1" y2="1"><stop offset="0" stopColor="#ff7a3c" /><stop offset=".3" stopColor="#e23ed0" /><stop offset=".65" stopColor="#7b5cf0" /><stop offset="1" stopColor="#1fa8ff" /></linearGradient></svg>
          <svg width="19" height="18" viewBox="0 0 19 18">
            <path d="M9 1.500v15Q6.500 19 4.500 16 2 16 2 13.200 0 12 .3 9.200 0 7 2 5.500 1.800 2.500 4.500 2 6.500-.8 9 1.500zM10 1.500v15q2.500 2.500 4.500-.5 2.500 0 2.500-2.800 2-1.200 1.700-4Q19 7 17 5.500 17.200 2.500 14.500 2 12.500-.8 10 1.500z" />
            <path className="folds" d="M3.500 5.500q2 .5 2.500-1M2.500 9H9M3.500 12.500h2v2M13 3.500v2h2.500M10.500 8.500h2.500l1 2M12.500 14v-2h3" />
          </svg>
        </Assistant>
        <Ink width="1600" height="900" viewBox="0 0 1600 900">
          <path d="M798 489L803 493.500L811 493Q826 497 840 499L866 499.500Q884 500 893 503Q902 505 906 510Q912 519 915 527Q917 536 917 552L913.500 587L910 610Q908 627 901 626.500L878 627Q865 626 851 623L824 618Q811 614 801 610Q786 604 781 599Q774 591 769 583Q765 576 760 574L752 568Q749 565 750 557Q753 540 764 528Q769 521 779 513L795 497Q799 493 805 493" />
          <path d="M1417 484.500L1441 466Q1451 459 1456 464.500Q1461 469 1467 470.500Q1475 474 1482 474.500L1510 474Q1526 473 1534 478Q1542 483 1542.500 493L1542 560L1539 580Q1538 595 1531 595" />
          <path d="M1536 591L1526 597Q1515 603 1505 603.500L1468 603.500Q1440 603 1426 597Q1415 592 1411 572Q1408 555 1408.500 533Q1408 505 1417 489" />
        </Ink>
      </Screen>
    </>
  );
}
